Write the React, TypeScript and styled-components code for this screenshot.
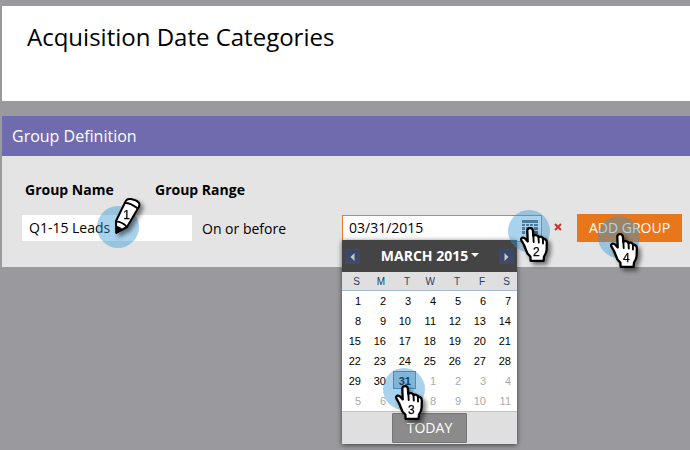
import React from 'react';
import styled, { createGlobalStyle } from 'styled-components';

const GlobalStyle = createGlobalStyle`
  * { box-sizing: border-box; }
  body {
    margin: 0;
    background: #9a999d;
    font-family: "Open Sans", "Noto Sans", sans-serif;
    color: #000;
    overflow: hidden;
  }
`;

const Page = styled.main`
  position: relative;
  height: 450px;
  padding: 6px 0 0 2px;
  overflow: hidden;
`;

const TitlePanel = styled.header`
  height: 95px;
  padding: 14px 0 0 25px;
  background: #fff;
`;

const Title = styled.h1`
  margin: 0;
  font-size: 24px;
  line-height: 34px;
  font-weight: 400;
  white-space: nowrap;
`;

const Group = styled.section`
  margin-top: 15px;
  height: 151px;
  background: #e4e4e4;
`;

const GroupHeading = styled.h2`
  margin: 0;
  height: 40px;
  padding-left: 10px;
  background: #6f6bae;
  color: #fff;
  font-size: 16px;
  font-weight: 400;
  line-height: 40px;
`;

const Labels = styled.div`
  display: grid;
  grid-template-columns: 130px 1fr;
  padding: 24px 0 0 23px;
  font-size: 14px;
  font-weight: 700;
  line-height: 20px;
`;

const Fields = styled.div`
  display: flex;
  padding: 14px 0 0 20px;
  font-size: 14px;
  line-height: 26px;
  white-space: nowrap;
`;

const NameField = styled.div`
  width: 170px;
  height: 26px;
  margin-top: 1px;
  padding-left: 7px;
  background: #fff;
`;

const Condition = styled.span`
  width: 150px;
  padding: 2px 0 0 10px;
`;

const DateField = styled.div`
  display: flex;
  justify-content: space-between;
  width: 200px;
  height: 27px;
  margin-top: 1px;
  padding: 0 3px 0 6px;
  border: 1px solid #ee7a1d;
  background: #fff;
  line-height: 24px;
`;

const GridIcon = styled.svg`
  width: 16px;
  height: 16px;
  margin-top: 4px;
`;

const Remove = styled.svg`
  width: 8px;
  height: 8px;
  margin: 9px 15px 0 12px;
`;

const AddButton = styled.button`
  width: 105px;
  height: 28px;
  padding: 0;
  border: 0;
  background: #e8771c;
  color: #fff;
  font: 400 14px/28px "Open Sans", sans-serif;
`;

const Calendar = styled.div`
  position: absolute;
  left: 342px;
  top: 240px;
  width: 175px;
  height: 204px;
  background: #fff;
  box-shadow: 0 1px 5px rgba(0, 0, 0, 0.6);
  font-family: "Liberation Sans", Arial, sans-serif;
`;

const MonthBar = styled.div`
  display: flex;
  align-items: center;
  justify-content: space-between;
  height: 32px;
  padding: 0 3px;
  background: #444;
`;

const Step = styled.span`
  display: flex;
  align-items: center;
  justify-content: center;
  width: 15px;
  height: 15px;
  margin-top: 1px;
  border: 1px solid #3d4a6b;
  border-radius: 1px;
  background: linear-gradient(#36466b, #424a66);
`;

const Month = styled.span`
  display: flex;
  align-items: center;
  gap: 3px;
  padding-left: 1px;
  color: #fff;
  font: 700 14px/32px "Open Sans", sans-serif;
  white-space: nowrap;

  svg { margin-top: -2px; }
`;

const WeekDays = styled.div`
  display: grid;
  grid-template-columns: repeat(7, 25px);
  height: 19px;
  border-bottom: 1px solid #a3bad9;
  background: #dfdfdf;
  color: #233d6d;
  font-size: 10px;
  line-height: 19px;
  text-align: right;

  span { padding-right: 7px; }
`;

const Days = styled.div`
  display: grid;
  grid-template-columns: repeat(7, 25px);
  grid-auto-rows: 20px;
  height: 120px;
`;

const Day = styled.span<{ $muted: boolean; $selected: boolean }>`
  margin: 0 1px;
  padding-right: ${p => (p.$selected ? 4 : 5)}px;
  height: ${p => (p.$selected ? 18 : 20)}px;
  border: ${p => (p.$selected ? '1px solid #4b88c8' : '0')};
  background: ${p => (p.$selected ? '#b9cddd' : 'transparent')};
  color: ${p => (p.$muted ? '#aaa' : '#000')};
  font-size: 11px;
  font-weight: ${p => (p.$selected ? 700 : 400)};
  line-height: ${p => (p.$selected ? 18 : 20)}px;
  text-align: right;
`;

const Footer = styled.div`
  display: flex;
  justify-content: center;
  height: 33px;
  padding-top: 1px;
  border-top: 1px solid #c9bfc0;
  background: #dfdfdf;
`;

const TodayButton = styled.button`
  width: 75px;
  height: 30px;
  padding: 0;
  border: 1px solid #757575;
  border-radius: 1px;
  background: #8b8b8b;
  color: #fff;
  font: 400 14px/26px "Open Sans", sans-serif;
`;

const Marker = styled.svg<{ $x: number; $y: number }>`
  position: absolute;
  left: ${p => p.$x - 30}px;
  top: ${p => p.$y - 40}px;
  width: 80px;
  height: 90px;
  pointer-events: none;
  filter: drop-shadow(3px 3px 2px rgba(0, 0, 0, 0.5));
`;

const Halo = styled.span<{ $x: number; $y: number }>`
  position: absolute;
  left: ${p => p.$x - 21}px;
  top: ${p => p.$y - 21}px;
  width: 42px;
  height: 42px;
  border-radius: 50%;
  background: rgba(50, 148, 210, 0.42);
`;

const StepNumber = styled.text`
  font: 12px "Liberation Sans", Arial, sans-serif;
  text-anchor: middle;
  fill: #000;
  stroke: #000;
  stroke-width: 0.25px;
`;

function Hand({ x, y, step }: { x: number; y: number; step: number }) {
  return (
    <>
      <Halo $x={x - 1} $y={y + 3} />
      <Marker $x={x} $y={y} viewBox="-30 -40 80 90">
        <path
          d="M-2.7 2.5 Q-2.5 0.2 0 0.2 Q2.7 0.2 2.9 2.7 L3.3 8 Q4 6.8 6 7.1 Q8.3 7.4 8.7 9.2 Q9.6 8.2 11.4 8.8 Q13 9.3 13.1 11 Q14.3 10.4 15.6 11.5 Q17 12.6 16.8 15 L16.6 22 Q16.4 25 14 28.6 L13.6 32.8 L0.6 32.8 L0.4 28.7 Q-3.4 25.5 -4.2 21.5 L-6 17 L-8.2 13.2 Q-9.8 10.5 -7.8 9.7 Q-5.9 9.2 -4.2 11.2 L-2.3 13.4 Z"
          fill="#fff" stroke="#000" strokeWidth="2.3" strokeLinejoin="round"
        />
        <path d="M3.3 7 L3.7 14 M8.5 9 L8.8 14.5 M12.9 11 L13 15.5" fill="none" stroke="#000" strokeWidth="1.9" strokeLinecap="round" />
        <StepNumber x="6.3" y="28.3">{step}</StepNumber>
      </Marker>
    </>
  );
}

function Pencil() {
  return (
    <>
      <Halo $x={118} $y={227} />
      <Marker $x={116} $y={234} viewBox="-30 -40 80 90">
        <path d="M0.2 -1.2 L0 -13 L9 -31.5 Q10.4 -35.8 15 -34.9 Q20.5 -33.8 22.8 -31.4 Q24 -30 22.8 -27 L11 -7 Z" fill="#fff" stroke="#000" strokeWidth="2" strokeLinejoin="round" />
        <path d="M8.8 -31 Q14 -31.5 21.8 -25.4 M0 -12.4 Q6 -12.6 10.8 -7.2" fill="none" stroke="#000" strokeWidth="1.9" />
        <path d="M0 -8 Q4 -7.8 6.7 -4.4 L0 0 Z" fill="#000" />
        <StepNumber x="10.7" y="-15">1</StepNumber>
      </Marker>
    </>
  );
}

const weekDays = ['S', 'M', 'T', 'W', 'T', 'F', 'S'];
const days = Array.from({ length: 42 }, (_, i) => ({ label: i < 31 ? i + 1 : i - 30, muted: i >= 31 }));

export default function App() {
  return (
    <>
      <GlobalStyle />
      <Page>
        <TitlePanel><Title>Acquisition Date Categories</Title></TitlePanel>
        <Group>
          <GroupHeading>Group Definition</GroupHeading>
          <Labels><span>Group Name</span><span>Group Range</span></Labels>
          <Fields>
            <NameField>Q1-15 Leads</NameField>
            <Condition>On or before</Condition>
            <DateField>
              03/31/2015
              <GridIcon viewBox="0 0 16 16">
                <path d="M0 0h16v3H0zM0 4h3v2H0zM4 4h3v2H4zM8 4h3v2H8zM12 4h4v2h-4zM0 7h3v3H0zM4 7h3v3H4zM8 7h3v3H8zM12 7h4v3h-4zM0 11h3v3H0zM4 11h3v3H4zM8 11h3v3H8zM12 11h4v3h-4z" fill="#5f6a74" />
              </GridIcon>
            </DateField>
            <Remove viewBox="0 0 8 8"><path d="M1 1l6 6M7 1L1 7" stroke="#cc2f2c" strokeWidth="1.9" /></Remove>
            <AddButton>ADD GROUP</AddButton>
          </Fields>
        </Group>
        <Calendar>
          <MonthBar>
            <Step><svg width="5" height="8" viewBox="0 0 5 8"><path d="M4.5 0v8L.5 4z" fill="#c5c7ce" /></svg></Step>
            <Month>MARCH 2015 <svg width="8" height="4" viewBox="0 0 8 4"><path d="M0 0h8L4 4z" fill="#fff" /></svg></Month>
            <Step><svg width="5" height="8" viewBox="0 0 5 8"><path d="M.5 0v8l4-4z" fill="#c5c7ce" /></svg></Step>
          </MonthBar>
          <WeekDays>{weekDays.map((d, i) => <span key={i}>{d}</span>)}</WeekDays>
          <Days>
            {days.map((d, i) => <Day key={i} $muted={d.muted} $selected={i === 30}>{d.label}</Day>)}
          </Days>
          <Footer><TodayButton>TODAY</TodayButton></Footer>
        </Calendar>
        <Pencil />
        <Hand x={530} y={228} step={2} />
        <Hand x={405} y={386} step={3} />
        <Hand x={620} y={234} step={4} />
      </Page>
    </>
  );
}
